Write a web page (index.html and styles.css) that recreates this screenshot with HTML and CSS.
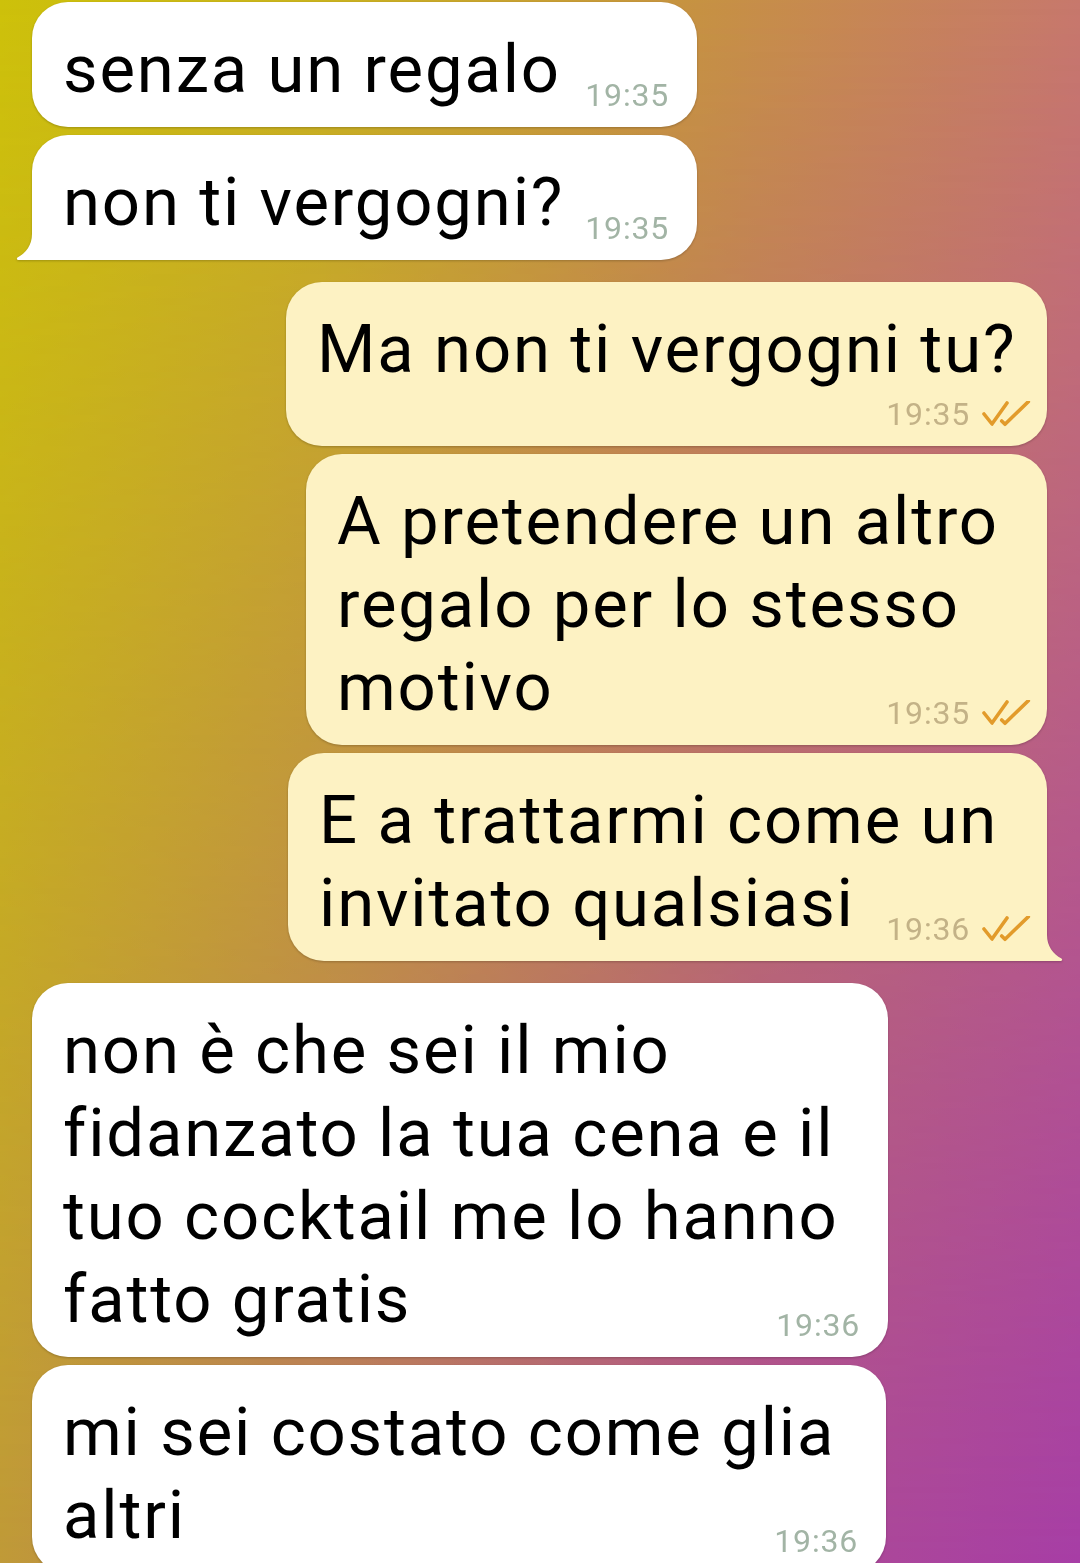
FILE: index.html
```html
<!DOCTYPE html>
<html lang="it">
<head>
<meta charset="utf-8">
<title>Chat</title>
<link rel="stylesheet" href="styles.css">
</head>
<body>
<div class="chat">
  <div class="group">
    <div class="bubble in b1">senza un regalo<span class="meta">19:35</span></div>
    <div class="bubble in b2 tail-left">non ti vergogni?<span class="meta">19:35</span>
      <svg class="tail tail-l" viewBox="0 0 20 34" aria-hidden="true"><path d="M16 0 V8 C16 19 10 27 1.5 31.5 Q0 33 2 34 H20 V0 Z"/></svg>
    </div>
  </div>
  <div class="group">
    <div class="bubble out b3">Ma non ti vergogni tu?<span class="meta">19:35<svg class="check" viewBox="0 0 50 26" aria-hidden="true"><path d="M3 13 L11 23 L26 2 M20.7 20 L24 23.3 L47.3 0.7"/></svg></span></div>
    <div class="bubble out b4">A pretendere un altro regalo per lo stesso motivo<span class="meta">19:35<svg class="check" viewBox="0 0 50 26" aria-hidden="true"><path d="M3 13 L11 23 L26 2 M20.7 20 L24 23.3 L47.3 0.7"/></svg></span></div>
    <div class="bubble out b5 tail-right">E a trattarmi come un invitato qualsiasi<span class="meta">19:36<svg class="check" viewBox="0 0 50 26" aria-hidden="true"><path d="M3 13 L11 23 L26 2 M20.7 20 L24 23.3 L47.3 0.7"/></svg></span>
      <svg class="tail tail-r" viewBox="0 0 20 34" aria-hidden="true"><path d="M4 0 V8 C4 19 10 27 18.5 31.5 Q20 33 18 34 H0 V0 Z"/></svg>
    </div>
  </div>
  <div class="group">
    <div class="bubble in b6">non è che sei il mio fidanzato la tua cena e il tuo cocktail me lo hanno fatto gratis<span class="meta">19:36</span></div>
    <div class="bubble in b7">mi sei costato come glia altri<span class="meta">19:36</span></div>
  </div>
</div>
</body>
</html>
```

FILE: styles.css
```css
html {
  background: linear-gradient(to right, #c09a38 0%, #b87268 38%, #ae4c94 70%, #a73ea6 100%);
  min-height: 100%;
}

body {
  margin: 0;
  font-family: Roboto, "Noto Sans", sans-serif;
  color: #000;
}

body::before {
  content: "";
  position: fixed;
  inset: 0;
  z-index: -1;
  background: linear-gradient(to right, #cdc10a 0%, #c9b21e 30%, #c6943f 62%, #c7786c 100%);
  -webkit-mask-image: linear-gradient(to bottom, #000 0%, rgba(0,0,0,0.5) 50%, transparent 100%);
  mask-image: linear-gradient(to bottom, #000 0%, rgba(0,0,0,0.5) 50%, transparent 100%);
}

.chat {
  display: flex;
  flex-direction: column;
  gap: 22px;
  padding-top: 2px;
}

.group {
  display: flex;
  flex-direction: column;
  gap: 8px;
}

.bubble {
  position: relative;
  box-sizing: border-box;
  padding: 26px 20px 16px 31px;
  font-size: 67px;
  line-height: 83px;
  letter-spacing: 1.85px;
  border-radius: 36px;
  filter: drop-shadow(0 1px 1px rgba(0, 0, 0, 0.22));
}

.in {
  align-self: flex-start;
  margin-left: 32px;
  background: #fff;
}

.out {
  align-self: flex-end;
  margin-right: 33px;
  background: #fdf2c3;
}

.b1, .b2 { width: 665px; }
.b3 { width: 761px; padding-bottom: 55px; }
.b4 { width: 741px; }
.b5 { width: 759px; }
.b6 { width: 856px; }
.b7 { width: 854px; }

.tail-left { border-bottom-left-radius: 0; }
.tail-right { border-bottom-right-radius: 0; }

.tail {
  position: absolute;
  bottom: 0;
  width: 20px;
  height: 34px;
}
.tail-l { left: -16px; fill: #fff; }
.tail-r { right: -16px; fill: #fdf2c3; }

.meta {
  position: absolute;
  bottom: 16px;
  display: flex;
  align-items: center;
  gap: 11px;
  font-size: 32px;
  line-height: 32px;
  letter-spacing: 0.8px;
}

.in .meta {
  right: 28px;
  color: #a2b4a5;
}

.out .meta {
  right: 16px;
  color: #c3b287;
}

.check {
  width: 50px;
  height: 26px;
  fill: none;
  stroke: #e29b2b;
  stroke-width: 3.6;
  stroke-linecap: round;
  stroke-linejoin: round;
}
```
